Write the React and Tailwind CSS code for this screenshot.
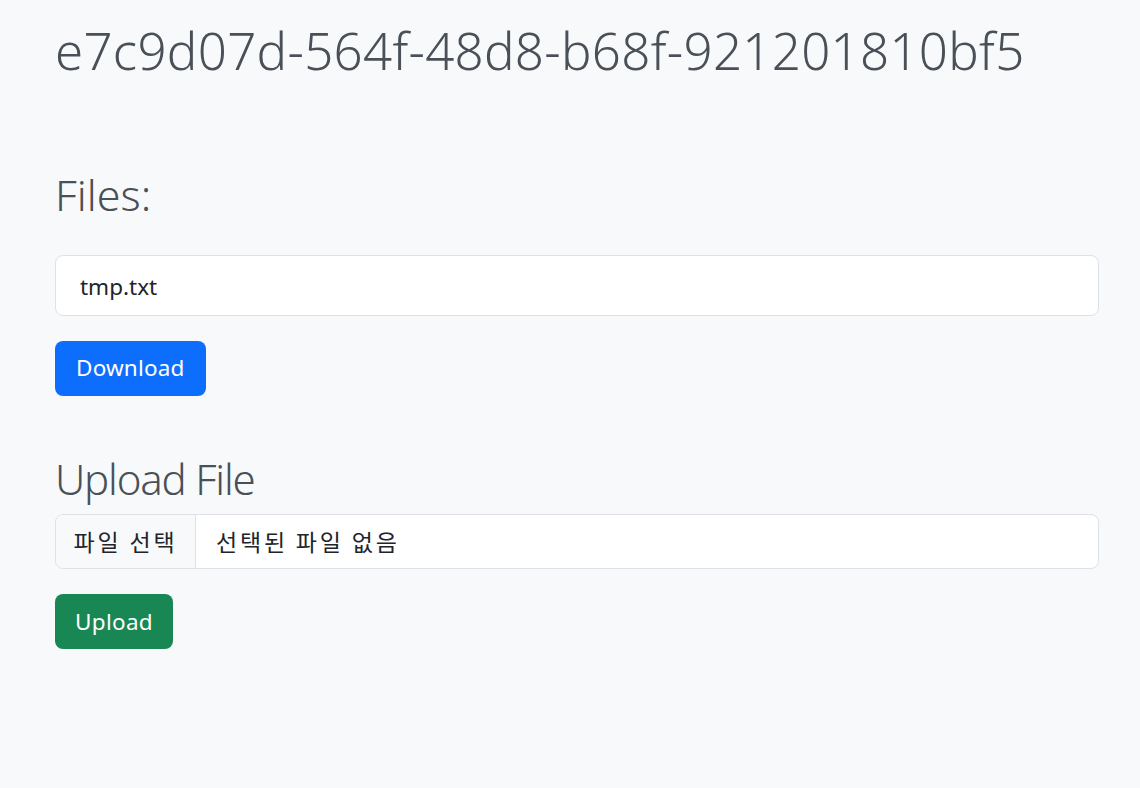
import React from 'react';

const App = () => {
  return (
    <div className="min-h-[788px] bg-[#f8f9fa] text-[#495057] font-['Noto_Sans','Noto_Sans_CJK_KR',sans-serif]">
      <div className="w-[1044px] ml-[55px] pt-[20px]">
        <h1 className="text-[51px] font-light leading-[1.2] tracking-[0.3px]">e7c9d07d-564f-48d8-b68f-921201810bf5</h1>

        <h2 className="mt-[88px] text-[43px] font-light leading-[1.2]">Files:</h2>
        <div className="mt-[34px] h-[61px] flex items-center bg-white border border-[#dee2e6] rounded-[8px] px-[24px] pt-[3px] text-[22.5px] text-[#212529]">
          tmp.txt
        </div>
        <button className="mt-[25px] h-[55px] px-[21px] rounded-[8px] bg-[#0d6efd] text-white text-[22.5px] tracking-[0.2px]">
          Download
        </button>

        <h3 className="mt-[58px] text-[42px] font-light leading-[1.2] tracking-[-1.2px]">Upload File</h3>
        <div className="mt-[10px] h-[55px] flex bg-white border border-[#dee2e6] rounded-[8px] overflow-hidden text-[23px] text-[#212529] font-['Noto_Sans_CJK_KR',sans-serif] tracking-[2.8px]">
          <div className="w-[140px] flex items-center justify-center bg-[#f8f9fa] border-r border-[#dee2e6]">
            파일 선택
          </div>
          <div className="flex items-center pl-[20px]">선택된 파일 없음</div>
        </div>
        <button className="mt-[25px] h-[55px] px-[20px] rounded-[8px] bg-[#198754] text-white text-[22.5px] tracking-[0.3px]">
          Upload
        </button>
      </div>
    </div>
  );
};

export default App;
